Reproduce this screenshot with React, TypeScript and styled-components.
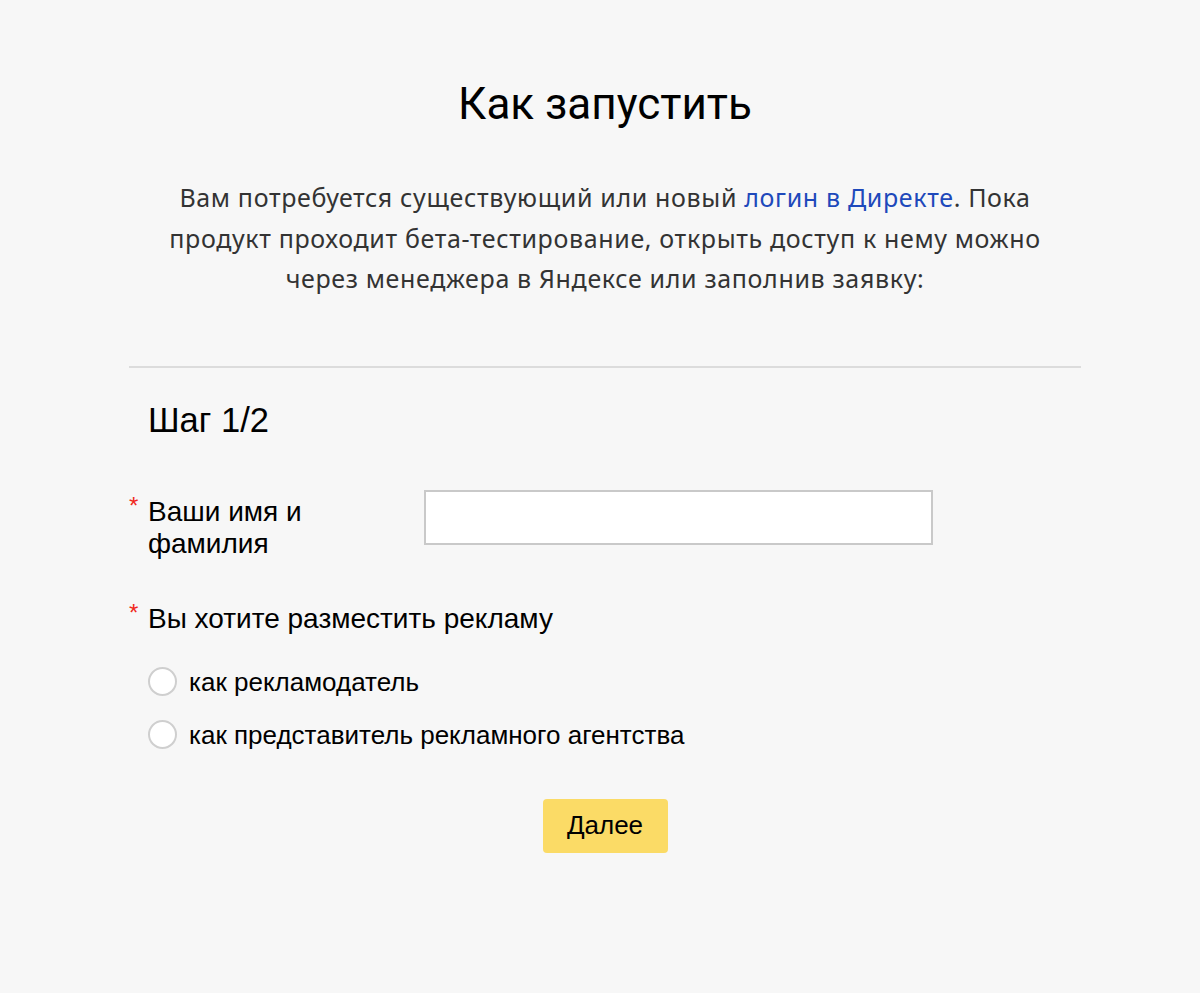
import React from "react";
import styled, { createGlobalStyle } from "styled-components";

const Global = createGlobalStyle`
  html, body { margin: 0; padding: 0; background: #f7f7f7; }
  body { font-family: "Liberation Sans", Arial, sans-serif; color: #000; }
`;

const Page = styled.div`
  width: 1200px;
  min-height: 993px;
  background: #f7f7f7;
  display: flex;
  justify-content: center;
  padding-left: 10px;
  box-sizing: border-box;
`;

const Container = styled.div`
  width: 952px;
  display: flex;
  flex-direction: column;
  align-items: center;
  padding-top: 76px;
`;

const Title = styled.h1`
  margin: 0;
  font-family: Roboto, sans-serif;
  font-weight: 400;
  font-size: 44px;
  line-height: 56px;
  color: #000;
`;

const Lead = styled.p`
  margin: 45px 0 0;
  width: 890px;
  text-align: center;
  font-family: "Noto Sans", sans-serif;
  font-size: 25px;
  letter-spacing: 0.65px;
  line-height: 40.5px;
  color: #333;
`;

const Link = styled.a`
  color: #1e49bb;
  text-decoration: none;
`;

const Divider = styled.hr`
  align-self: stretch;
  margin: 67px 0 0;
  border: none;
  border-top: 2px solid #dcdcdc;
`;

const Form = styled.form`
  align-self: stretch;
  display: flex;
  flex-direction: column;
  padding: 0 0 0 19px;
`;

const StepTitle = styled.h2`
  margin: 32px 0 0;
  font-weight: 400;
  font-size: 34.5px;
  line-height: 40px;
`;

const FieldRow = styled.div`
  display: flex;
  align-items: flex-start;
  margin-top: 50px;
`;

const Label = styled.label<{ $width?: number }>`
  position: relative;
  font-size: 28px;
  line-height: 32px;
  width: ${(p) => (p.$width ? `${p.$width}px` : "auto")};
  flex-shrink: 0;
  margin-top: 6px;
`;

const Star = styled.span`
  position: absolute;
  left: -19px;
  top: -6px;
  color: #f0291e;
  font-size: 24px;
`;

const TextInput = styled.input`
  width: 509px;
  height: 55px;
  box-sizing: border-box;
  border: 2px solid #c9c9c9;
  background: #fff;
  outline: none;
  font-size: 22px;
  padding: 0 10px;
`;

const Question = styled.div`
  margin-top: 43px;
`;

const Options = styled.div`
  display: flex;
  flex-direction: column;
  gap: 21px;
  margin-top: 31px;
`;

const Option = styled.label`
  display: flex;
  align-items: center;
  gap: 12px;
  font-size: 26px;
  line-height: 32px;
  cursor: pointer;
`;

const Radio = styled.span`
  width: 29px;
  height: 29px;
  box-sizing: border-box;
  border-radius: 50%;
  border: 2px solid #cfcfcf;
  background: #fff;
  flex-shrink: 0;
`;

const ButtonRow = styled.div`
  display: flex;
  justify-content: center;
  margin-top: 48px;
  margin-left: -19px;
`;

const Button = styled.button`
  width: 125px;
  height: 54px;
  border: none;
  border-radius: 4px;
  background: #fbdb66;
  font-family: "Liberation Sans", Arial, sans-serif;
  font-size: 26px;
  color: #000;
  cursor: pointer;
`;

export default function App() {
  return (
    <>
      <Global />
      <Page>
        <Container>
          <Title>Как запустить</Title>
          <Lead>
            Вам потребуется существующий или новый <Link href="#">логин в Директе</Link>. Пока
            продукт проходит бета-тестирование, открыть доступ к нему можно через менеджера в
            Яндексе или заполнив заявку:
          </Lead>
          <Divider />
          <Form onSubmit={(e) => e.preventDefault()}>
            <StepTitle>Шаг 1/2</StepTitle>
            <FieldRow>
              <Label $width={276}>
                <Star>*</Star>
                Ваши имя и фамилия
              </Label>
              <TextInput type="text" />
            </FieldRow>
            <Question>
              <Label>
                <Star>*</Star>
                Вы хотите разместить рекламу
              </Label>
            </Question>
            <Options>
              <Option>
                <Radio />
                как рекламодатель
              </Option>
              <Option>
                <Radio />
                как представитель рекламного агентства
              </Option>
            </Options>
            <ButtonRow>
              <Button type="submit">Далее</Button>
            </ButtonRow>
          </Form>
        </Container>
      </Page>
    </>
  );
}
